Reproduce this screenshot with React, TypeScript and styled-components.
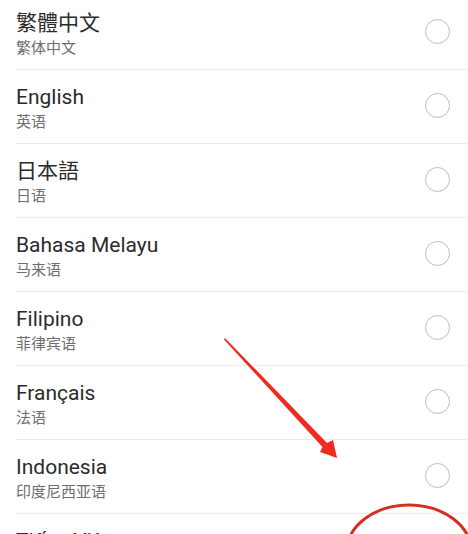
import React from 'react';
import styled, { createGlobalStyle } from 'styled-components';

const GlobalStyle = createGlobalStyle`
  html, body {
    margin: 0;
    padding: 0;
    background: #ffffff;
  }
  body {
    font-family: Roboto, "Noto Sans CJK SC", "Noto Sans", sans-serif;
  }
`;

const Page = styled.div`
  position: relative;
  width: 468px;
  height: 534px;
  overflow: hidden;
  background: #ffffff;
`;

const List = styled.ul`
  list-style: none;
  margin: -4px 0 0 0;
  padding: 0;
`;

const Row = styled.li`
  display: flex;
  align-items: center;
  margin-left: 16px;
  padding: 14px 18px 11px 0;
  border-bottom: 1px solid #ececec;
`;

const Texts = styled.div`
  flex: 1;
  display: flex;
  flex-direction: column;
`;

const Title = styled.span`
  font-size: 21px;
  line-height: 26px;
  color: #2b2b2b;
`;

const Subtitle = styled.span`
  margin-top: 2px;
  font-size: 15px;
  line-height: 20px;
  color: #6e6e6e;
`;

const Radio = styled.span`
  width: 23px;
  height: 23px;
  margin-bottom: 5px;
  border: 1.6px solid #bdbdbd;
  border-radius: 50%;
`;

const Overlay = styled.svg`
  position: absolute;
  inset: 0;
  pointer-events: none;
`;

const languages = [
  { name: '繁體中文', native: '繁体中文' },
  { name: 'English', native: '英语' },
  { name: '日本語', native: '日语' },
  { name: 'Bahasa Melayu', native: '马来语' },
  { name: 'Filipino', native: '菲律宾语' },
  { name: 'Français', native: '法语' },
  { name: 'Indonesia', native: '印度尼西亚语' },
  { name: 'Tiếng Việt', native: '越南语' },
];

export default function App() {
  return (
    <Page>
      <GlobalStyle />
      <List>
        {languages.map((lang) => (
          <Row key={lang.name}>
            <Texts>
              <Title>{lang.name}</Title>
              <Subtitle>{lang.native}</Subtitle>
            </Texts>
            <Radio />
          </Row>
        ))}
      </List>
      <Overlay width="468" height="534" viewBox="0 0 468 534">
        <polygon
          points="225,338 327,443 333,440 337,458 320,452 322.5,447 224,339.5"
          fill="#ee2a22"
        />
        <ellipse cx="409" cy="551" rx="62" ry="46" fill="none" stroke="#d3301f" strokeWidth="3" />
      </Overlay>
    </Page>
  );
}
